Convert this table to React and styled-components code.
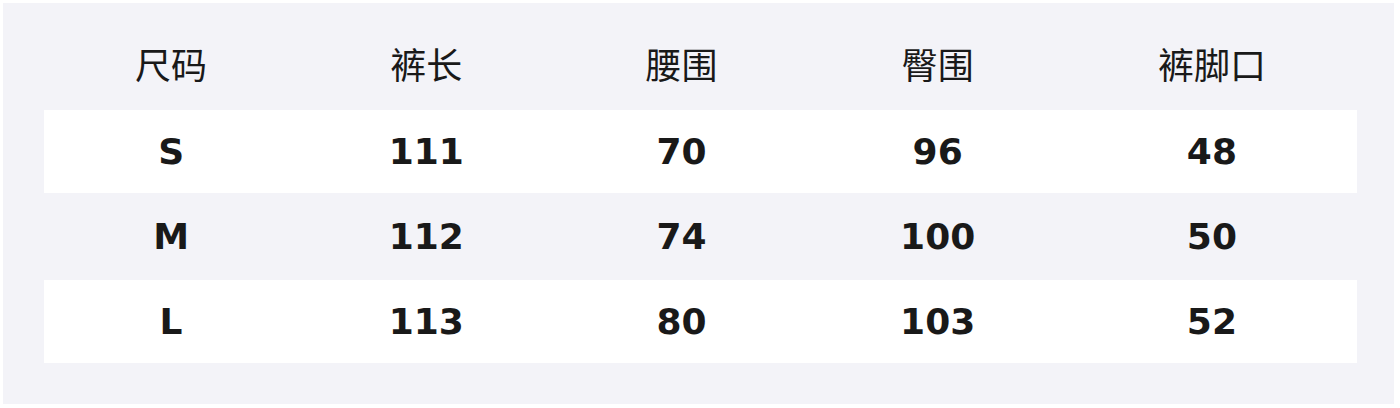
import React from 'react'
import styled, { createGlobalStyle } from 'styled-components'

const GlobalStyle = createGlobalStyle`
  html, body {
    margin: 0;
    padding: 0;
    background: #ffffff;
  }
`

const Panel = styled.div`
  margin: 3px 6px 4px 3px;
  padding: 0 37px 41px 41px;
  background: #f3f3f8;
  font-family: "DejaVu Sans", "Noto Sans CJK SC", sans-serif;
  color: #191919;
  display: flex;
  flex-direction: column;
  gap: 2px;
`

const Row = styled.div`
  display: grid;
  grid-template-columns: 254fr 256fr 254fr 258fr 290fr;
  align-items: center;
  height: ${(p) => (p.$head ? '105px' : '83px')};
  padding-top: ${(p) => (p.$head ? '3px' : '0')};
  box-sizing: border-box;
  background: ${(p) => (p.$white ? '#ffffff' : 'transparent')};
`

const Cell = styled.div`
  text-align: center;
  font-size: 36px;
  font-weight: ${(p) => (p.$head ? 400 : 700)};
  line-height: 1.2;
  padding-top: ${(p) => (p.$head ? '19px' : '0')};
`

const headers = ['尺码', '裤长', '腰围', '臀围', '裤脚口']

const rows = [
  ['S', '111', '70', '96', '48'],
  ['M', '112', '74', '100', '50'],
  ['L', '113', '80', '103', '52'],
]

export default function App() {
  return (
    <>
      <GlobalStyle />
      <Panel>
        <Row $head>
          {headers.map((h) => (
            <Cell key={h} $head>
              {h}
            </Cell>
          ))}
        </Row>
        {rows.map((r, i) => (
          <Row key={r[0]} $white={i !== 1}>
            {r.map((v, j) => (
              <Cell key={j}>{v}</Cell>
            ))}
          </Row>
        ))}
      </Panel>
    </>
  )
}
